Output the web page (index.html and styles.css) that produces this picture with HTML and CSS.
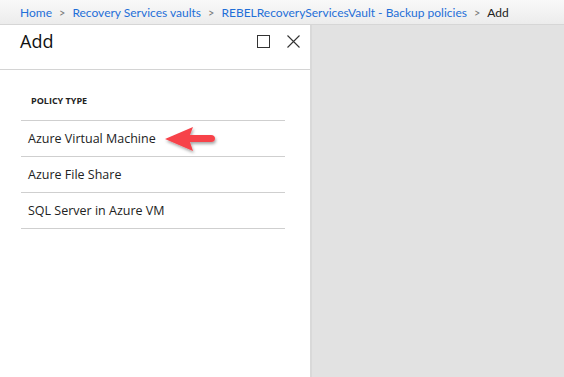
FILE: index.html
```html
<!DOCTYPE html>
<html lang="en">
<head>
  <meta charset="UTF-8">
  <title>Add - Backup policies</title>
  <link rel="stylesheet" href="styles.css">
</head>
<body>
  <div class="breadcrumb">
    <a href="#">Home</a><span class="sep">&gt;</span>
    <a href="#">Recovery Services vaults</a><span class="sep">&gt;</span>
    <a href="#">REBELRecoveryServicesVault - Backup policies</a><span class="sep">&gt;</span>
    <span class="current">Add</span>
  </div>

  <div class="workspace">
    <div class="blade">
      <div class="blade-header">
        <h1>Add</h1>
        <div class="blade-actions">
          <svg width="13" height="13" viewBox="0 0 13 13"><rect x="0.5" y="0.5" width="12" height="12" fill="none" stroke="#333" stroke-width="1"/></svg>
          <svg width="13" height="13" viewBox="0 0 13 13"><path d="M0.5 0.5 L12.5 12.5 M12.5 0.5 L0.5 12.5" stroke="#333" stroke-width="1.1"/></svg>
        </div>
      </div>
      <div class="blade-content">
        <div class="section-title">POLICY TYPE</div>
        <ul class="policy-list">
          <li>Azure Virtual Machine
            <!-- callout arrow from the screenshot -->
            <svg class="arrow" width="56" height="30" viewBox="0 0 56 30">
              <defs>
                <filter id="sh" x="-20%" y="-20%" width="140%" height="160%">
                  <feDropShadow dx="1" dy="2" stdDeviation="1.5" flood-color="#000" flood-opacity="0.35"/>
                </filter>
              </defs>
              <path d="M2 14 L30 2 L27 10 L48 10 Q52 10 52 13.5 Q52 17 48 17 L27 17 L30 26 Z" fill="#f7434a" filter="url(#sh)"/>
            </svg>
          </li>
          <li>Azure File Share</li>
          <li>SQL Server in Azure VM</li>
        </ul>
      </div>
    </div>
    <div class="backdrop"></div>
  </div>
</body>
</html>
```

FILE: styles.css
```css
html, body {
  height: 100%;
}
body {
  margin: 0;
  font-family: "Open Sans", "Noto Sans", sans-serif;
  color: #1e1e1e;
  background-color: #e2e2e2;
  display: flex;
  flex-direction: column;
}
.breadcrumb {
  height: 24px;
  padding-left: 20px;
  display: flex;
  align-items: center;
  font-family: Lato, "Open Sans", sans-serif;
  font-size: 12px;
  background: linear-gradient(#f9f9f9, #ececec);
  border-bottom: 1px solid #d6d6d6;
  white-space: nowrap;
}
.breadcrumb a {
  color: #1f6fd8;
  text-decoration: none;
}
.breadcrumb .sep {
  color: #777;
  margin: 0 7px;
  font-size: 11px;
}
.breadcrumb .current {
  color: #222;
}
.workspace {
  flex: 1;
  display: flex;
}
.blade {
  width: 310px;
  background-color: white;
  border-right: 2px solid #d9d9d9;
}
.backdrop {
  flex: 1;
}
.blade-header {
  height: 44px;
  display: flex;
  align-items: center;
  justify-content: space-between;
  padding: 0 10px 0 20px;
  border-bottom: 1px solid #d4d4d4;
}
.blade-header h1 {
  margin: 0 0 13px 0;
  font-size: 18px;
  font-weight: normal;
  color: #111;
}
.blade-actions {
  display: flex;
  gap: 17px;
  margin-bottom: 12px;
}
.blade-content {
  padding: 24px 25px 0 21px;
}
.section-title {
  font-size: 9px;
  font-weight: bold;
  color: #222;
  padding-left: 10px;
  margin-bottom: 13px;
}
.policy-list {
  list-style: none;
  margin: 0;
  padding: 0;
  border-top: 1px solid #cfcfcf;
}
.policy-list li {
  height: 35px;
  display: flex;
  align-items: center;
  padding-left: 7px;
  font-size: 12.5px;
  color: #222;
  border-bottom: 1px solid #cfcfcf;
  position: relative;
}
.arrow {
  position: absolute;
  left: 142px;
  top: 4px;
}
```
